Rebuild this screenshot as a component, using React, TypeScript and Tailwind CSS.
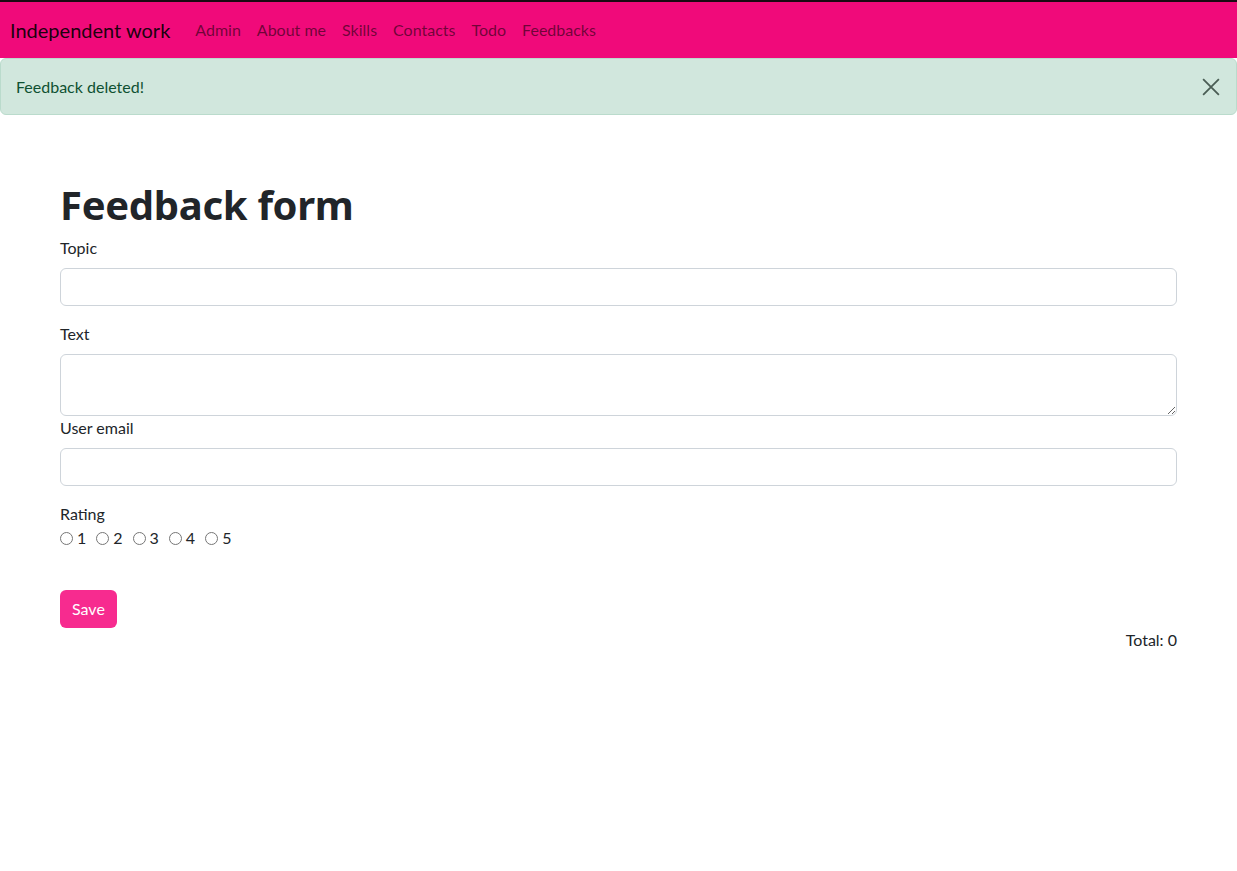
import { useState } from 'react';

const links = ['Admin', 'About me', 'Skills', 'Contacts', 'Todo', 'Feedbacks'];

export default function App() {
  const [showAlert, setShowAlert] = useState(true);

  return (
    <div className="min-h-screen bg-white text-[#212529] font-['Lato','Noto_Sans',sans-serif] text-base">
      {/* Navbar */}
      <nav className="border-t-2 border-[#1a0a12] bg-[#f00a7a] h-[58px] flex items-center px-[10px]">
        <span className="text-[20px] text-black/90 mr-[25px]">Independent work</span>
        <div className="flex gap-[16px]">
          {links.map(l => (
            <a key={l} href="#" className="text-black/55 hover:text-black/70">
              {l}
            </a>
          ))}
        </div>
      </nav>

      {/* Alert */}
      {showAlert && (
        <div className="h-[57px] bg-[#d1e7dd] border border-[#badbcc] rounded-[6px] text-[#0f5132] flex items-center justify-between pl-[15px] pr-[16px]">
          <span>Feedback deleted!</span>
          <button onClick={() => setShowAlert(false)} className="text-[#4a5d54]">
            <svg width="18" height="18" viewBox="0 0 16 16" fill="none" stroke="currentColor" strokeWidth="1.6">
              <path d="M1 1l14 14M15 1L1 15" />
            </svg>
          </button>
        </div>
      )}

      {/* Form */}
      <div className="mx-auto max-w-[1141px] px-[12px] pt-[66px]">
        <h1 className="text-[40px] font-['Noto_Sans',sans-serif] font-bold tracking-[-0.3px] leading-[1.2] mb-[7px]">Feedback form</h1>

        <label className="block mb-[8px]">Topic</label>
        <input className="block w-full h-[38px] border border-[#ced4da] rounded-[6px] px-3 mb-[16px]" />

        <label className="block mb-[8px]">Text</label>
        <textarea className="block w-full h-[62px] border border-[#ced4da] rounded-[6px] px-3" />

        <label className="block mb-[8px]">User email</label>
        <input className="block w-full h-[38px] border border-[#ced4da] rounded-[6px] px-3 mb-[16px]" />

        <div>Rating</div>
        <div className="flex items-center gap-[10px]">
          {[1, 2, 3, 4, 5].map(n => (
            <label key={n} className="flex items-center gap-[4px]">
              <input type="radio" name="rating" className="w-[13px] h-[13px] m-0" />
              <span>{n}</span>
            </label>
          ))}
        </div>

        <button className="mt-[40px] h-[38px] px-[12px] bg-[#f72b8f] text-white rounded-[6px]">Save</button>

        <div className="text-right">Total: 0</div>
      </div>
    </div>
  );
}
